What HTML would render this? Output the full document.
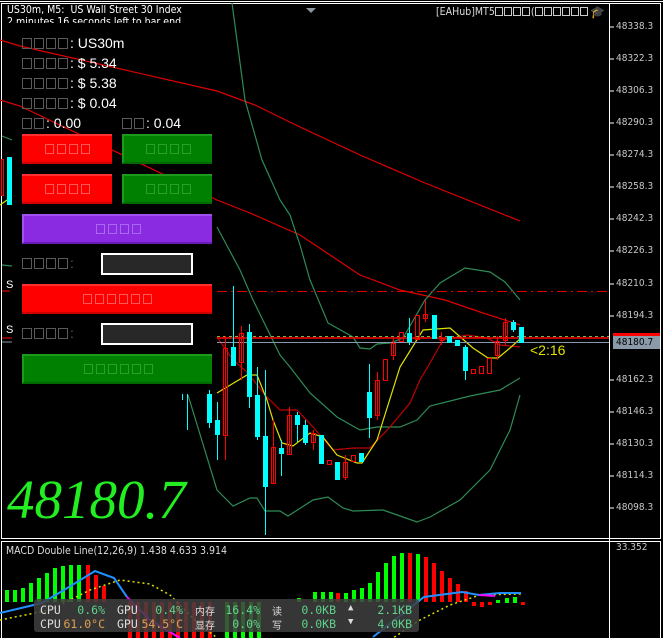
<!DOCTYPE html>
<html><head><meta charset="utf-8"><style>
*{margin:0;padding:0;box-sizing:border-box}
body{width:663px;height:638px;background:#000;overflow:hidden;position:relative;font-family:"Liberation Sans","Noto Sans CJK SC",sans-serif;}
.abs{position:absolute}
.t{color:#fff;font-size:14px;white-space:nowrap}
.q{display:inline-block;width:10px;height:11px;border:1px solid #5a5a5a;margin-right:2px;vertical-align:-1px}
.qs{display:inline-block;width:8px;height:9px;border:1px solid #ccc;margin-right:1px;vertical-align:-1px}
.btn{position:absolute;height:30px;text-align:center;line-height:26px;font-size:13px;font-family:"Liberation Sans","Noto Sans CJK SC",sans-serif}
.btn .q{width:9px;height:10px;margin:0 1.5px}
.r{background:#ff0000;border-top:2px solid #ff3030;border-bottom:2px solid #d00000}
.r .q{border-color:#ff5a5a}
.gr{background:#008000;border-top:2px solid #1c9a1c;border-left:2px solid #1c9a1c;border-bottom:2px solid #006800}
.gr .q{border-color:#2aa02a}
.inp{position:absolute;width:92px;height:22px;background:#282828;border:2px solid #fff}
.ax{position:absolute;left:616px;font-size:10px;color:#c8c8c8;font-family:"DejaVu Sans Condensed","Liberation Sans",sans-serif}
.ov{font-family:"DejaVu Sans Mono","Liberation Mono","Noto Sans CJK SC",monospace;font-size:11.5px;position:absolute;white-space:nowrap}
.ovl{color:#ddd}.ovv{color:#5fd38a;text-align:right}.ovo{color:#e0a050;text-align:right}
</style></head><body>
<svg class="abs" style="left:0;top:0" width="663" height="638">
<rect x="1.5" y="3.5" width="659" height="535" fill="none" stroke="#fff"/>
<line x1="609.5" y1="3" x2="609.5" y2="638" stroke="#fff"/>
<line x1="0" y1="1.5" x2="663" y2="1.5" stroke="#fff"/>
<rect x="1.5" y="541.5" width="659" height="100" fill="none" stroke="#fff"/>
<polygon points="306,8 316,8 311,13" fill="#8a96a0"/>
<g stroke="#fff">
<line x1="609" y1="27" x2="614" y2="27"/><line x1="609" y1="59" x2="614" y2="59"/><line x1="609" y1="91" x2="614" y2="91"/><line x1="609" y1="123" x2="614" y2="123"/><line x1="609" y1="155" x2="614" y2="155"/><line x1="609" y1="187" x2="614" y2="187"/><line x1="609" y1="219" x2="614" y2="219"/><line x1="609" y1="251" x2="614" y2="251"/><line x1="609" y1="284" x2="614" y2="284"/><line x1="609" y1="316" x2="614" y2="316"/><line x1="609" y1="380" x2="614" y2="380"/><line x1="609" y1="412" x2="614" y2="412"/><line x1="609" y1="444" x2="614" y2="444"/><line x1="609" y1="476" x2="614" y2="476"/><line x1="609" y1="508" x2="614" y2="508"/>
</g>
<g fill="none" stroke-width="1.2">
<polyline stroke="#e00000" points="0,40 20,46 217,91 255,105 300,127 360,155 425,183 520,221"/>
<polyline stroke="#e00000" points="0,100 20,106 217,200 250,213 300,235 360,275 400,290 445,300 480,312 520,325"/>
<polyline stroke="#2e8b57" points="232,3 245,100 262,160 280,200 290,215 300,245 310,280 328,323 353,337 360,348 370,349 377,344 390,343 403,338 425,300 440,283 465,268 490,272 505,282 520,300"/>
<polyline stroke="#2e8b57" points="217,227 240,270 253,300 280,355 290,367 310,393 337,417 360,430 377,427 400,427 417,420 430,406 470,396 500,390 520,378"/>
<polyline stroke="#2e8b57" points="188,395 217,490 233,506 250,498 257,498 265,511 280,511 288,516 313,500 328,497 343,508 353,511 383,510 403,517 417,522 430,517 460,500 490,470 510,430 520,395"/>
<polyline stroke="#c00000" points="217,337 233,360 247,372 265,395 280,410 297,410 313,427 333,450 353,448 370,448 390,427 410,403 420,380 430,363 443,340 467,335 487,338 500,345 520,347"/>
<polyline stroke="#e0e000" points="0,205 10,198"/>
<polyline stroke="#e0e000" points="217,393 247,375 257,375 267,400 273,420 282,443 293,446 310,433 323,437 337,455 357,463 362,463 377,440 400,367 423,330 450,328 473,348 488,358 498,358 510,348 520,339"/>
<polyline stroke="#2e8b57" points="2,136 12,140"/><polyline stroke="#2e8b57" points="2,265 12,266"/>
</g>
<line x1="217" y1="291.5" x2="609" y2="291.5" stroke="#e00000" stroke-dasharray="10,4,2,4"/>
<line x1="217" y1="338" x2="609" y2="338" stroke="#ff0000" stroke-width="1.5"/>
<line x1="217" y1="336.5" x2="609" y2="336.5" stroke="#7cb040" stroke-dasharray="3,3"/>
<line x1="217" y1="342.5" x2="609" y2="342.5" stroke="#8898a8"/>
<line x1="2" y1="338" x2="12" y2="338" stroke="#ff0000"/><line x1="2" y1="342" x2="12" y2="342" stroke="#8898a8"/>
<line x1="2" y1="291" x2="10" y2="291" stroke="#ff0000"/>
<g stroke-width="1">
<rect x="7" y="157" width="5" height="48" fill="#0ff"/><rect x="1.5" y="159.5" width="2" height="36" fill="none" stroke="#f00"/>
<g stroke="#0ff"><line x1="209.5" y1="390" x2="209.5" y2="428"/><line x1="217.5" y1="402" x2="217.5" y2="460"/><line x1="233.5" y1="286" x2="233.5" y2="366"/><line x1="249.5" y1="324" x2="249.5" y2="408"/><line x1="257.5" y1="367" x2="257.5" y2="440"/><line x1="265.5" y1="370" x2="265.5" y2="535"/><line x1="281.5" y1="440" x2="281.5" y2="476"/><line x1="297.5" y1="412" x2="297.5" y2="442"/><line x1="305.5" y1="420" x2="305.5" y2="445"/><line x1="369.5" y1="364" x2="369.5" y2="438"/><line x1="409.5" y1="318" x2="409.5" y2="345"/><line x1="465.5" y1="345" x2="465.5" y2="380"/><line x1="513.5" y1="320" x2="513.5" y2="332"/><line x1="182.5" y1="394" x2="182.5" y2="400"/><line x1="187.5" y1="394" x2="187.5" y2="430"/></g>
<g fill="#0ff"><rect x="207" y="394" width="5" height="29"/><rect x="215" y="420" width="5" height="15"/><rect x="231" y="347" width="5" height="19"/><rect x="247" y="332" width="5" height="65"/><rect x="255" y="395" width="5" height="42"/><rect x="263" y="436" width="5" height="51"/><rect x="279" y="448" width="5" height="6"/><rect x="295" y="415" width="5" height="10"/><rect x="303" y="425" width="5" height="18"/><rect x="319" y="435" width="5" height="29"/><rect x="335" y="462" width="5" height="18"/><rect x="359" y="453" width="5" height="9"/><rect x="367" y="392" width="5" height="26"/><rect x="407" y="333" width="5" height="9"/><rect x="432" y="315" width="5" height="24"/><rect x="447" y="336" width="5" height="7"/><rect x="455" y="340" width="5" height="6"/><rect x="463" y="347" width="5" height="24"/><rect x="511" y="322" width="5" height="8"/><rect x="519" y="327" width="5" height="16"/></g>
<g stroke="#f00"><line x1="225.5" y1="336" x2="225.5" y2="460"/><line x1="241.5" y1="326" x2="241.5" y2="380"/><line x1="273.5" y1="420" x2="273.5" y2="484"/><line x1="289.5" y1="407" x2="289.5" y2="455"/><line x1="313.5" y1="430" x2="313.5" y2="450"/><line x1="345.5" y1="455" x2="345.5" y2="480"/><line x1="377.5" y1="372" x2="377.5" y2="420"/><line x1="393.5" y1="338" x2="393.5" y2="360"/><line x1="425.5" y1="300" x2="425.5" y2="322"/><line x1="441.5" y1="332" x2="441.5" y2="345"/><line x1="497.5" y1="336" x2="497.5" y2="360"/><line x1="505.5" y1="318" x2="505.5" y2="345"/></g>
<g fill="none" stroke="#f00"><rect x="223.5" y="348.5" width="4" height="87"/><rect x="239.5" y="333.5" width="4" height="29"/><rect x="271.5" y="447.5" width="4" height="36"/><rect x="287.5" y="415.5" width="4" height="39"/><rect x="311.5" y="433.5" width="4" height="9"/><rect x="327.5" y="460.5" width="4" height="4"/><rect x="343.5" y="462.5" width="4" height="15"/><rect x="351.5" y="455.5" width="4" height="6"/><rect x="375.5" y="380.5" width="4" height="35"/><rect x="383.5" y="359.5" width="4" height="21"/><rect x="391.5" y="343.5" width="4" height="12"/><rect x="399.5" y="332.5" width="4" height="9"/><rect x="415.5" y="315.5" width="4" height="24"/><rect x="423.5" y="314.5" width="4" height="4"/><rect x="440" y="338.5" width="4" height="2"/><rect x="471.5" y="369.5" width="4" height="4"/><rect x="479.5" y="366.5" width="4" height="7"/><rect x="487.5" y="358.5" width="4" height="15"/><rect x="495.5" y="341.5" width="4" height="14"/><rect x="503.5" y="322.5" width="4" height="18"/></g>
</g>
<rect x="613" y="333" width="47" height="6" fill="#f00"/>
<rect x="613" y="336" width="47" height="13" fill="#8a9aa8"/>
<g fill="#00ff00">
<rect x="5" y="590" width="4" height="12"/><rect x="13" y="590" width="4" height="12"/><rect x="21" y="588" width="4" height="14"/><rect x="29" y="583" width="4" height="19"/><rect x="37" y="578" width="4" height="24"/><rect x="45" y="573" width="4" height="29"/><rect x="53" y="568" width="4" height="34"/><rect x="61" y="566" width="4" height="36"/><rect x="69" y="565" width="4" height="37"/><rect x="77" y="565" width="4" height="37"/>
<rect x="297" y="598" width="4" height="4"/><rect x="313" y="592" width="4" height="10"/><rect x="321" y="592" width="4" height="10"/><rect x="329" y="592" width="4" height="10"/><rect x="344" y="593" width="4" height="9"/><rect x="352" y="590" width="4" height="12"/><rect x="360" y="588" width="4" height="14"/><rect x="368" y="583" width="4" height="19"/><rect x="376" y="572" width="4" height="30"/><rect x="384" y="563" width="4" height="39"/><rect x="392" y="556" width="4" height="46"/><rect x="400" y="553" width="4" height="49"/><rect x="416" y="554" width="4" height="48"/>
<rect x="496" y="600" width="4" height="3"/><rect x="505" y="598" width="4" height="5"/><rect x="513" y="597" width="4" height="6"/>
<rect x="225" y="602" width="4" height="36"/><rect x="233" y="602" width="4" height="36"/><rect x="241" y="602" width="4" height="36"/><rect x="249" y="602" width="4" height="36"/><rect x="257" y="602" width="4" height="36"/>
</g>
<g fill="#ff0000">
<rect x="86" y="565" width="4" height="37"/><rect x="94" y="575" width="4" height="27"/><rect x="102" y="586" width="4" height="16"/>
<rect x="336" y="593" width="4" height="9"/><rect x="408" y="553" width="4" height="49"/><rect x="424" y="557" width="4" height="45"/><rect x="432" y="563" width="4" height="39"/><rect x="440" y="571" width="4" height="31"/><rect x="448" y="578" width="4" height="24"/><rect x="456" y="584" width="4" height="18"/><rect x="464" y="591" width="4" height="11"/>
<rect x="472" y="602" width="4" height="4"/><rect x="480" y="602" width="4" height="5"/><rect x="488" y="602" width="4" height="3"/><rect x="521" y="602" width="4" height="3"/>
<rect x="128" y="602" width="4" height="36"/><rect x="136" y="602" width="4" height="36"/><rect x="144" y="602" width="4" height="36"/><rect x="152" y="602" width="4" height="36"/><rect x="160" y="602" width="4" height="36"/><rect x="168" y="602" width="4" height="36"/><rect x="176" y="602" width="4" height="36"/><rect x="184" y="602" width="4" height="36"/><rect x="192" y="602" width="4" height="36"/><rect x="200" y="602" width="4" height="36"/><rect x="208" y="602" width="4" height="36"/>
</g>
<polyline fill="none" stroke="#e0e000" stroke-width="1.5" stroke-dasharray="2,3" points="0,620 50,610 90,590 120,580 150,584 170,595 200,625 220,640"/>
<polyline fill="none" stroke="#e0e000" stroke-width="1.5" stroke-dasharray="2,3" points="390,640 420,620 450,605 480,595 521,594"/>
<polyline fill="none" stroke="#2090ff" stroke-width="2" points="0,613 42,603 64,590 95,571 114,578 127,597"/>
<polyline fill="none" stroke="#ff00ff" stroke-width="2" points="127,597 150,620 180,638"/>
<polyline fill="none" stroke="#2090ff" stroke-width="2" points="373,637 424,597 462,592 479,595 500,593 521,593"/>
<polyline fill="none" stroke="#ff00ff" stroke-width="2" points="479,595 495,596"/>
<rect x="34" y="599" width="385" height="33" rx="3" fill="#404040" fill-opacity="0.85"/>
</svg>

<div class="abs" style="left:7px;top:4px;width:200px;height:19px;overflow:hidden;font-size:10.5px;color:#fff;line-height:12px;font-family:'DejaVu Sans Condensed','Liberation Sans',sans-serif;white-space:nowrap">US30m, M5:&nbsp; US Wall Street 30 Index<br>2 minutes 16 seconds left to bar end</div>
<div class="abs" style="left:436px;top:6px;font-size:10.5px;color:#ddd;font-family:'DejaVu Sans Condensed','Liberation Sans',sans-serif;white-space:nowrap">[EAHub]MT5<span class="qs"></span><span class="qs"></span><span class="qs"></span><span class="qs"></span>(<span class="qs"></span><span class="qs"></span><span class="qs"></span><span class="qs"></span><span class="qs"></span><span class="qs"></span></div>
<div class="abs" style="left:590px;top:5px;font-size:12px;color:#3a9ad9">🎓</div>

<div class="abs t" style="left:22px;top:35px"><span class="q"></span><span class="q"></span><span class="q"></span><span class="q"></span>: US30m</div>
<div class="abs t" style="left:22px;top:55px"><span class="q"></span><span class="q"></span><span class="q"></span><span class="q"></span>: $ 5.34</div>
<div class="abs t" style="left:22px;top:75px"><span class="q"></span><span class="q"></span><span class="q"></span><span class="q"></span>: $ 5.38</div>
<div class="abs t" style="left:22px;top:95px"><span class="q"></span><span class="q"></span><span class="q"></span><span class="q"></span>: $ 0.04</div>
<div class="abs t" style="left:22px;top:115px"><span class="q"></span><span class="q"></span>: 0.00</div>
<div class="abs t" style="left:122px;top:115px"><span class="q"></span><span class="q"></span>: 0.04</div>

<div class="btn r" style="left:22px;top:134px;width:90px"><span class="q"></span><span class="q"></span><span class="q"></span><span class="q"></span></div>
<div class="btn gr" style="left:122px;top:134px;width:90px"><span class="q"></span><span class="q"></span><span class="q"></span><span class="q"></span></div>
<div class="btn r" style="left:22px;top:174px;width:90px"><span class="q"></span><span class="q"></span><span class="q"></span><span class="q"></span></div>
<div class="btn gr" style="left:122px;top:174px;width:90px"><span class="q"></span><span class="q"></span><span class="q"></span><span class="q"></span></div>
<div class="btn" style="left:22px;top:214px;width:190px;background:#8a2be2;border-top:2px solid #a050f0;border-left:2px solid #a050f0;border-bottom:2px solid #6a1ab8"><span class="q" style="border-color:#a868f0"></span><span class="q" style="border-color:#a868f0"></span><span class="q" style="border-color:#a868f0"></span><span class="q" style="border-color:#a868f0"></span></div>
<div class="abs t" style="left:22px;top:255px"><span class="q"></span><span class="q"></span><span class="q"></span><span class="q"></span><span style="color:#5a5a5a">:</span></div>
<div class="inp" style="left:101px;top:253px"></div>
<div class="btn r" style="left:22px;top:284px;width:190px"><span class="q"></span><span class="q"></span><span class="q"></span><span class="q"></span><span class="q"></span><span class="q"></span></div>
<div class="abs t" style="left:22px;top:325px"><span class="q"></span><span class="q"></span><span class="q"></span><span class="q"></span><span style="color:#5a5a5a">:</span></div>
<div class="inp" style="left:101px;top:323px"></div>
<div class="btn gr" style="left:22px;top:354px;width:190px"><span class="q"></span><span class="q"></span><span class="q"></span><span class="q"></span><span class="q"></span><span class="q"></span></div>
<div class="abs" style="left:6px;top:279px;color:#fff;font-size:11px">S</div>
<div class="abs" style="left:6px;top:324px;color:#fff;font-size:11px">S</div>

<div class="abs" style="left:7px;top:470px;font-family:'Liberation Serif',serif;font-style:italic;font-size:55px;color:#22ee22;line-height:60px">48180.7</div>
<div class="abs" style="left:530px;top:342px;color:#e0e000;font-size:14px">&lt;2:16</div>

<div class="ax" style="top:21px">48338.3</div><div class="ax" style="top:53px">48322.3</div><div class="ax" style="top:85px">48306.3</div><div class="ax" style="top:117px">48290.3</div><div class="ax" style="top:149px">48274.3</div><div class="ax" style="top:181px">48258.3</div><div class="ax" style="top:213px">48242.3</div><div class="ax" style="top:245px">48226.3</div><div class="ax" style="top:278px">48210.3</div><div class="ax" style="top:310px">48194.3</div><div class="ax" style="top:337px;color:#000">48180.7</div><div class="ax" style="top:374px">48162.3</div><div class="ax" style="top:406px">48146.3</div><div class="ax" style="top:438px">48130.3</div><div class="ax" style="top:470px">48114.3</div><div class="ax" style="top:502px">48098.3</div>
<div class="ax" style="top:542px">33.352</div>
<div class="abs" style="left:6px;top:545px;font-size:10.5px;color:#ddd;font-family:'DejaVu Sans Condensed','Liberation Sans',sans-serif;white-space:nowrap">MACD Double Line(12,26,9) 1.438 4.633 3.914</div>

<div class="ov ovl" style="left:40px;top:603px">CPU</div><div class="ov ovv" style="left:60px;top:603px;width:45px">0.6%</div>
<div class="ov ovl" style="left:117px;top:603px">GPU</div><div class="ov ovv" style="left:138px;top:603px;width:45px">0.4%</div>
<div class="ov ovl" style="left:195px;top:603px;font-size:10px">内存</div><div class="ov ovv" style="left:210px;top:603px;width:50px">16.4%</div>
<div class="ov ovl" style="left:272px;top:603px;font-size:10px">读</div><div class="ov ovv" style="left:286px;top:603px;width:50px">0.0KB</div>
<div class="ov ovl" style="left:348px;top:603px;font-size:9px">▲</div><div class="ov ovv" style="left:362px;top:603px;width:50px">2.1KB</div>
<div class="ov ovl" style="left:40px;top:617px">CPU</div><div class="ov ovo" style="left:60px;top:617px;width:45px">61.0°C</div>
<div class="ov ovl" style="left:117px;top:617px">GPU</div><div class="ov ovo" style="left:134px;top:617px;width:49px">54.5°C</div>
<div class="ov ovl" style="left:195px;top:617px;font-size:10px">显存</div><div class="ov ovv" style="left:210px;top:617px;width:50px">0.0%</div>
<div class="ov ovl" style="left:272px;top:617px;font-size:10px">写</div><div class="ov ovv" style="left:286px;top:617px;width:50px">0.0KB</div>
<div class="ov ovl" style="left:348px;top:617px;font-size:9px">▼</div><div class="ov ovv" style="left:362px;top:617px;width:50px">4.0KB</div>
</body></html>
